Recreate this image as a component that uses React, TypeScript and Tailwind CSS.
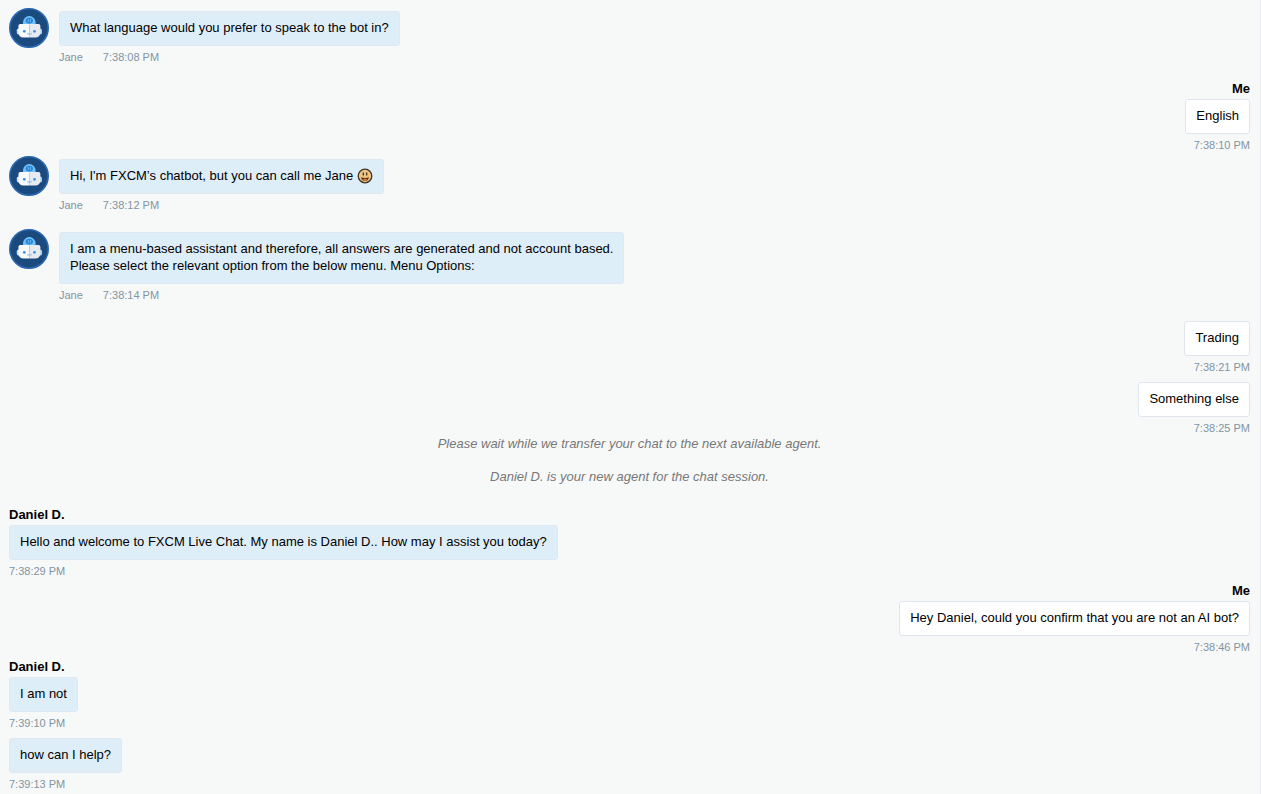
import clsx from "clsx";

type ChatItem =
  | {
      kind: "message";
      from: "bot" | "agent" | "me";
      name?: string;
      lines: string[];
      smile?: boolean;
      time: string;
      spacing: string;
    }
  | { kind: "notice"; text: string; spacing: string };

const CHAT: ChatItem[] = [
  { kind: "message", from: "bot", name: "Jane", lines: ["What language would you prefer to speak to the bot in?"], time: "7:38:08 PM", spacing: "mt-0" },
  { kind: "message", from: "me", name: "Me", lines: ["English"], time: "7:38:10 PM", spacing: "mt-4" },
  { kind: "message", from: "bot", name: "Jane", lines: ["Hi, I'm FXCM’s chatbot, but you can call me Jane"], smile: true, time: "7:38:12 PM", spacing: "mt-1" },
  {
    kind: "message",
    from: "bot",
    name: "Jane",
    lines: [
      "I am a menu-based assistant and therefore, all answers are generated and not account based.",
      "Please select the relevant option from the below menu. Menu Options:",
    ],
    time: "7:38:14 PM",
    spacing: "mt-[17px]",
  },
  { kind: "message", from: "me", lines: ["Trading"], time: "7:38:21 PM", spacing: "mt-[19px]" },
  { kind: "message", from: "me", lines: ["Something else"], time: "7:38:25 PM", spacing: "mt-2" },
  { kind: "notice", text: "Please wait while we transfer your chat to the next available agent.", spacing: "mt-0" },
  { kind: "notice", text: "Daniel D. is your new agent for the chat session.", spacing: "mt-4" },
  {
    kind: "message",
    from: "agent",
    name: "Daniel D.",
    lines: ["Hello and welcome to FXCM Live Chat. My name is Daniel D.. How may I assist you today?"],
    time: "7:38:29 PM",
    spacing: "mt-[21px]",
  },
  { kind: "message", from: "me", name: "Me", lines: ["Hey Daniel, could you confirm that you are not an AI bot?"], time: "7:38:46 PM", spacing: "mt-1" },
  { kind: "message", from: "agent", name: "Daniel D.", lines: ["I am not"], time: "7:39:10 PM", spacing: "mt-1" },
  { kind: "message", from: "agent", lines: ["how can I help?"], time: "7:39:13 PM", spacing: "mt-2" },
];

function BotAvatar() {
  return (
    <svg viewBox="0 0 40 40" className="size-10 shrink-0" role="img" aria-label="Jane">
      <circle cx="20" cy="20" r="19.2" fill="#1b4b7e" stroke="#2a67b0" strokeWidth="1.6" />
      {/* dome */}
      <path d="M14 17v-2.600a6.300 6.300 0 0 1 12.600 0V17z" fill="#74c0f8" />
      <ellipse cx="20.3" cy="12.600" rx="3.700" ry="2.900" fill="#2386dc" />
      <path d="M19.300 11v3.200M21.500 11v3.200" stroke="#8fcbfa" strokeWidth="0.700" />
      {/* ears */}
      <rect x="7.800" y="20.500" width="4" height="6" rx="1.800" fill="#c9e2f6" />
      <rect x="29" y="20.500" width="4" height="6" rx="1.800" fill="#b5d3ec" />
      {/* head */}
      <path d="M11.500 16H20.500v13.500H14.500c-3.200 0-4.700-1.700-4.900-4.500l-.2-7a2 2 0 0 1 2.100-2z" fill="#f8f9fb" />
      <path d="M20.400 16H29.300a2 2 0 0 1 2.100 2l-.2 7c-.2 2.800-1.700 4.500-4.900 4.500h-5.900z" fill="#e6eaf1" />
      <circle cx="15.300" cy="23.300" r="1.400" fill="#3a97e8" />
      <circle cx="25.500" cy="23.300" r="1.400" fill="#3a97e8" />
      <path d="M18 25.700q2.400.9 4.800 0" fill="none" stroke="#7db4e6" strokeWidth="0.900" />
    </svg>
  );
}

function Smile() {
  return (
    <svg viewBox="0 0 16 16" className="ml-1 inline-block size-4 align-[-4px]" role="img" aria-label="Smiling face">
      <circle cx="8" cy="8" r="6.800" fill="#efc580" stroke="#3d3327" strokeWidth="1.300" />
      <ellipse cx="6.300" cy="6" rx="0.700" ry="1.700" fill="#33281c" />
      <ellipse cx="9.700" cy="6" rx="0.700" ry="1.700" fill="#33281c" />
      <path d="M4 9.200q4 1.400 8 0c-.3 2.400-2 3.800-4 3.800s-3.700-1.400-4-3.800z" fill="#5a351f" />
      <path d="M6.300 11q1.700-.6 3.400 0v1.200q-1.700 1-3.400 0z" fill="#dd7a3c" />
    </svg>
  );
}

function Message({ item }: { item: Extract<ChatItem, { kind: "message" }> }) {
  const mine = item.from === "me";
  const bot = item.from === "bot";

  return (
    <li className={clsx("flex gap-2.5", mine && "justify-end", item.spacing)}>
      {bot && <BotAvatar />}
      <div className={clsx("flex flex-col", mine ? "items-end" : "items-start", bot && "pt-[3px]")}>
        {!bot && item.name && <strong className="mb-0.5 leading-[17px] font-bold">{item.name}</strong>}
        <div
          className={clsx(
            "rounded-[3px] border px-2.5 pt-[7px] pb-[9px] leading-[17px]",
            mine ? "border-[#e1e6ee] bg-white" : "border-[#dfe8f0] bg-[#deeef9]"
          )}
        >
          {item.lines.map((line) => (
            <p key={line}>
              {line}
              {item.smile && <Smile />}
            </p>
          ))}
        </div>
        <div className="mt-1 flex gap-5 text-[11px] leading-[14px] text-[#8294a1]">
          {bot && <span>{item.name}</span>}
          <time>{item.time}</time>
        </div>
      </div>
    </li>
  );
}

export default function App() {
  return (
    <main className="min-h-screen border-r border-[#e9ecee] bg-[#f7f9f9] pt-2 pr-2.5 pl-[9px] font-['Liberation_Sans',Arial,sans-serif] text-[13px] text-black">
      <ol className="flex flex-col">
        {CHAT.map((item, i) =>
          item.kind === "notice" ? (
            <li key={i} className={clsx("text-center leading-[17px] text-[#777] italic", item.spacing)}>
              {item.text}
            </li>
          ) : (
            <Message key={i} item={item} />
          )
        )}
      </ol>
    </main>
  );
}
